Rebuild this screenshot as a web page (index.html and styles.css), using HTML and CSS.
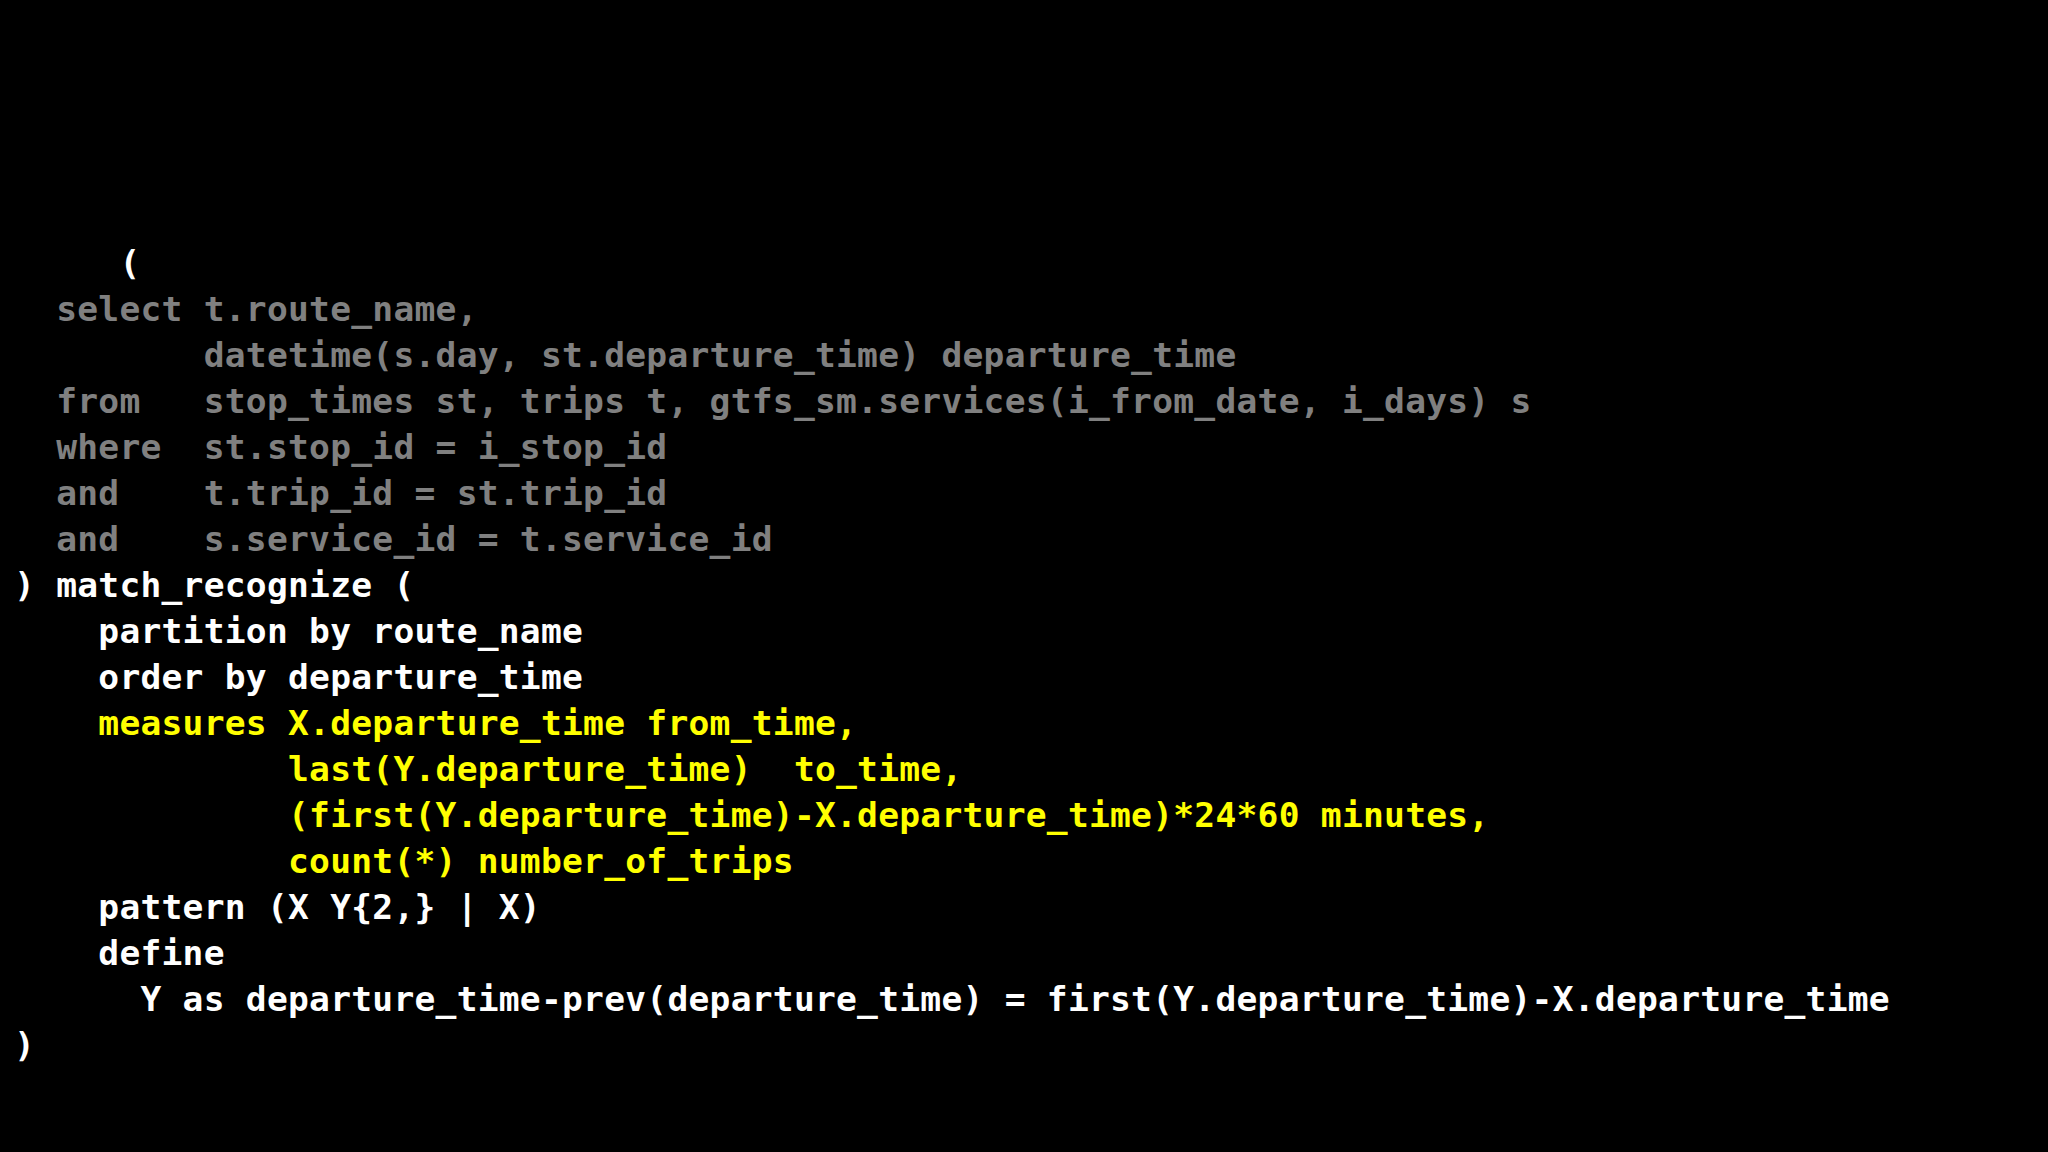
FILE: index.html
```html
<!DOCTYPE html>
<html>
<head>
<meta charset="utf-8">
<link rel="stylesheet" href="styles.css">
</head>
<body>
<div class="slide">
<div class="code">
<div class="line white">     (</div>
<div class="line gray">  select t.route_name,</div>
<div class="line gray">         datetime(s.day, st.departure_time) departure_time</div>
<div class="line gray">  from   stop_times st, trips t, gtfs_sm.services(i_from_date, i_days) s</div>
<div class="line gray">  where  st.stop_id = i_stop_id</div>
<div class="line gray">  and    t.trip_id = st.trip_id</div>
<div class="line gray">  and    s.service_id = t.service_id</div>
<div class="line white">) match_recognize (</div>
<div class="line white">    partition by route_name</div>
<div class="line white">    order by departure_time</div>
<div class="line yellow">    measures X.departure_time from_time,</div>
<div class="line yellow">             last(Y.departure_time)  to_time,</div>
<div class="line yellow">             (first(Y.departure_time)-X.departure_time)*24*60 minutes,</div>
<div class="line yellow">             count(*) number_of_trips</div>
<div class="line white">    pattern (X Y{2,} | X)</div>
<div class="line white">    define</div>
<div class="line white">      Y as departure_time-prev(departure_time) = first(Y.departure_time)-X.departure_time</div>
<div class="line white">)</div>
</div>
</div>
</body>
</html>
```
FILE: styles.css
```css
html, body {
  margin: 0;
  padding: 0;
  background: #000;
}
.slide {
  width: 2048px;
  height: 1152px;
  background: #000;
  overflow: hidden;
  box-sizing: border-box;
  padding-top: 240px;
  padding-left: 14px;
}
.code {
  font-family: "DejaVu Sans Mono", "Liberation Mono", monospace;
  font-weight: bold;
  font-size: 34.6px;
  letter-spacing: 0.26px;
  line-height: 46px;
}
.line {
  white-space: pre;
  height: 46px;
}
.white { color: #ffffff; }
.gray { color: #808080; }
.yellow { color: #ffff00; }
```
